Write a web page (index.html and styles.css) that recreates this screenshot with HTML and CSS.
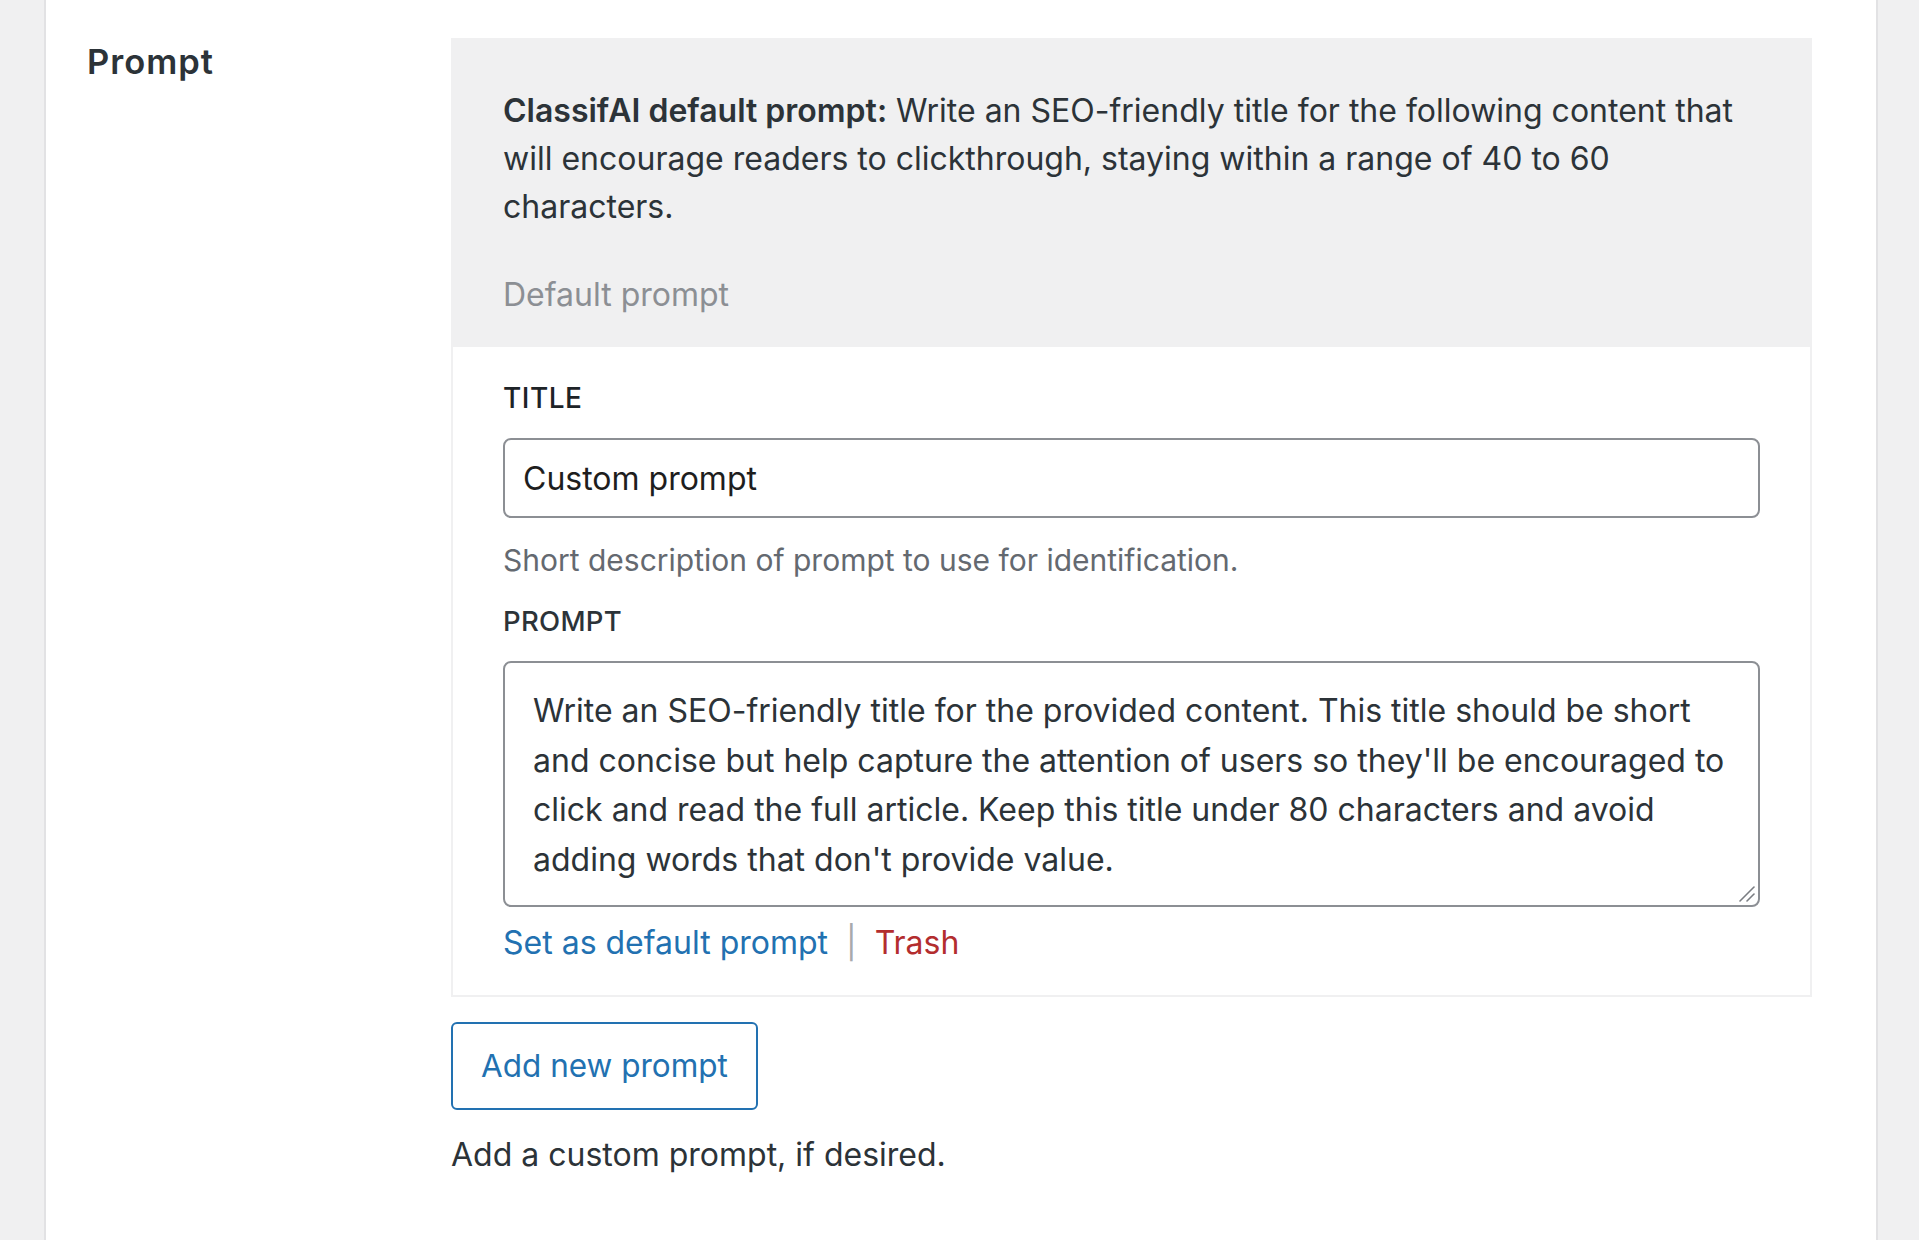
FILE: index.html
```html
<!DOCTYPE html>
<html lang="en">
<head>
<meta charset="utf-8">
<title>Prompt settings</title>
<link rel="stylesheet" href="styles.css">
</head>
<body>
<div class="panel">
  <div class="row">
    <div class="th">Prompt</div>
    <div class="td">
      <div class="prompt-default">
        <p class="default-text"><strong>ClassifAI default prompt:</strong> Write an SEO-friendly title for the following content that will encourage readers to clickthrough, staying within a range of 40 to 60 characters.</p>
        <p class="default-label">Default prompt</p>
      </div>
      <div class="prompt-card">
        <label class="field-label field-label-title" for="title">Title</label>
        <input class="text-input" id="title" type="text" value="Custom prompt">
        <p class="description">Short description of prompt to use for identification.</p>
        <label class="field-label field-label-prompt" for="prompt">Prompt</label>
        <div class="area-wrap">
          <textarea class="text-area" id="prompt">Write an SEO-friendly title for the provided content. This title should be short and concise but help capture the attention of users so they'll be encouraged to click and read the full article. Keep this title under 80 characters and avoid adding words that don't provide value.</textarea>
          <svg class="grip" width="18" height="18" viewBox="0 0 18 18" aria-hidden="true">
            <line x1="2" y1="16" x2="16" y2="2" stroke="#7a7d82" stroke-width="1.6" stroke-linecap="round"/>
            <line x1="9" y1="16" x2="16" y2="9" stroke="#7a7d82" stroke-width="1.6" stroke-linecap="round"/>
          </svg>
        </div>
        <div class="actions">
          <a class="action-link" href="#">Set as default prompt</a>
          <span class="sep">|</span>
          <a class="action-link trash" href="#">Trash</a>
        </div>
      </div>
      <button class="btn-secondary" type="button">Add new prompt</button>
      <p class="after-text">Add a custom prompt, if desired.</p>
    </div>
  </div>
</div>
</body>
</html>
```

FILE: styles.css
```css
html, body {
  margin: 0;
  padding: 0;
}
body {
  background: #f0f0f1;
  font-family: Inter, "Liberation Sans", sans-serif;
  color: #2c3338;
  padding: 0 41px 0 44px;
  height: 1240px;
  overflow: hidden;
}
.panel {
  background: #fff;
  border-left: 2px solid #e2e2e4;
  border-right: 2px solid #e2e2e4;
  height: 1240px;
  box-sizing: border-box;
  padding-left: 41px;
}
.row {
  display: flex;
}
.th {
  width: 364px;
  flex: none;
  font-size: 34.5px;
  font-weight: 600;
  letter-spacing: 1px;
  line-height: 40px;
  color: #2c3338;
  padding-top: 42px;
}
.td {
  width: 1361px;
  flex: none;
  padding-top: 38px;
}
.prompt-default {
  background: #f0f0f1;
  padding: 49px 52px 28px;
}
.prompt-default p {
  margin: 0;
  font-size: 32px;
  line-height: 48px;
}
.default-text strong {
  font-weight: 600;
  color: #2c3338;
}
.default-label {
  margin-top: 40px !important;
  color: #8c8f94;
}
.prompt-card {
  border: 2px solid #f0f0f1;
  border-top: 0;
  padding: 34px 49px 28px 50px;
  display: flex;
  flex-direction: column;
  align-items: flex-start;
}
.field-label {
  display: block;
  font-size: 28px;
  line-height: 34px;
  font-weight: 500;
  text-transform: uppercase;
  letter-spacing: 0.3px;
}
.field-label-title {
  color: #1d2327;
  letter-spacing: 0.5px;
}
.field-label-prompt {
  color: #2c3338;
  font-size: 27.5px;
}
.text-input {
  margin-top: 23px;
  width: 1257px;
  height: 80px;
  box-sizing: border-box;
  border: 2px solid #8c8f94;
  border-radius: 8px;
  padding: 0 18px;
  font-family: Inter, "Liberation Sans", sans-serif;
  font-size: 32px;
  color: #1e1e1e;
  background: #fff;
}
.description {
  margin: 20px 0 0;
  font-size: 30px;
  line-height: 44px;
  color: #646970;
}
.field-label-prompt {
  margin-top: 22px;
}
.area-wrap {
  position: relative;
  margin-top: 23px;
  width: 1257px;
  height: 246px;
}
.text-area {
  display: block;
  width: 1257px;
  height: 246px;
  box-sizing: border-box;
  border: 2px solid #8c8f94;
  border-radius: 8px;
  padding: 23px 28px 19px;
  font-family: Inter, "Liberation Sans", sans-serif;
  font-size: 32px;
  line-height: 49.6px;
  color: #2c3338;
  background: #fff;
  resize: none;
  overflow: hidden;
  margin: 0;
}
.grip {
  position: absolute;
  right: 4px;
  bottom: 4px;
}
.actions {
  margin-top: 12px;
  font-size: 32px;
  line-height: 48px;
  display: flex;
  align-items: center;
}
.action-link {
  color: #2271b1;
  text-decoration: none;
}
.action-link.trash {
  color: #b32d2e;
}
.sep {
  color: #a7aaad;
  margin: 0 18px;
}
.btn-secondary {
  display: block;
  margin-top: 25px;
  height: 88px;
  box-sizing: border-box;
  padding: 0 28px;
  border: 2px solid #2271b1;
  border-radius: 6px;
  background: #fff;
  color: #2271b1;
  font-family: Inter, "Liberation Sans", sans-serif;
  font-size: 31.5px;
  line-height: 48px;
}
.after-text {
  margin: 21px 0 0;
  font-size: 32px;
  line-height: 48px;
  color: #2c3338;
}
```
